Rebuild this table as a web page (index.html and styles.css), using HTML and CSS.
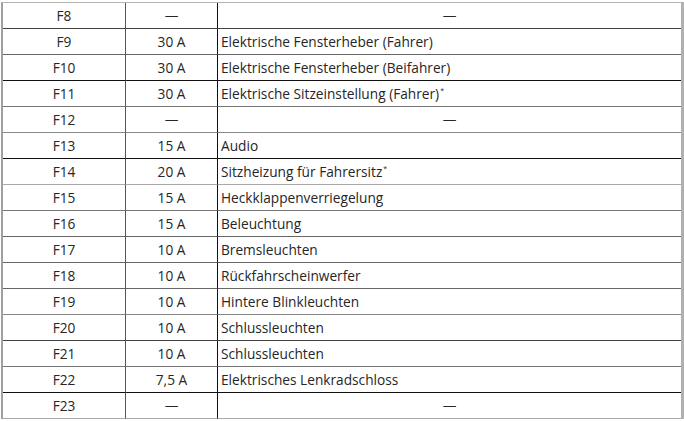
FILE: index.html
```html
<!DOCTYPE html>
<html lang="de">
<head>
<meta charset="utf-8">
<link rel="stylesheet" href="styles.css">
</head>
<body>
<table class="fuses">
<tbody>
<tr class="r-a"><td class="c-id">F8</td><td class="c-amp">—</td><td class="c-desc c-dash">—</td></tr>
<tr class="r-b"><td class="c-id">F9</td><td class="c-amp">30 A</td><td class="c-desc">Elektrische Fensterheber (Fahrer)</td></tr>
<tr class="r-k"><td class="c-id">F10</td><td class="c-amp">30 A</td><td class="c-desc">Elektrische Fensterheber (Beifahrer)</td></tr>
<tr class="r-c"><td class="c-id">F11</td><td class="c-amp">30 A</td><td class="c-desc">Elektrische Sitzeinstellung (Fahrer)<sup class="star">*</sup></td></tr>
<tr class="r-d"><td class="c-id">F12</td><td class="c-amp">—</td><td class="c-desc c-dash">—</td></tr>
<tr class="r-k"><td class="c-id">F13</td><td class="c-amp">15 A</td><td class="c-desc">Audio</td></tr>
<tr class="r-l"><td class="c-id">F14</td><td class="c-amp">20 A</td><td class="c-desc">Sitzheizung für Fahrersitz<sup class="star">*</sup></td></tr>
<tr class="r-c"><td class="c-id">F15</td><td class="c-amp">15 A</td><td class="c-desc">Heckklappenverriegelung</td></tr>
<tr class="r-b"><td class="c-id">F16</td><td class="c-amp">15 A</td><td class="c-desc">Beleuchtung</td></tr>
<tr class="r-b"><td class="c-id">F17</td><td class="c-amp">10 A</td><td class="c-desc">Bremsleuchten</td></tr>
<tr class="r-b"><td class="c-id">F18</td><td class="c-amp">10 A</td><td class="c-desc">Rückfahrscheinwerfer</td></tr>
<tr class="r-d"><td class="c-id">F19</td><td class="c-amp">10 A</td><td class="c-desc">Hintere Blinkleuchten</td></tr>
<tr class="r-a"><td class="c-id">F20</td><td class="c-amp">10 A</td><td class="c-desc">Schlussleuchten</td></tr>
<tr class="r-c"><td class="c-id">F21</td><td class="c-amp">10 A</td><td class="c-desc">Schlussleuchten</td></tr>
<tr class="r-k"><td class="c-id">F22</td><td class="c-amp">7,5 A</td><td class="c-desc">Elektrisches Lenkradschloss</td></tr>
<tr class="r-l"><td class="c-id">F23</td><td class="c-amp">—</td><td class="c-desc c-dash">—</td></tr>
</tbody>
</table>
</body>
</html>
```
FILE: styles.css
```css
html, body {
  margin: 0;
  padding: 0;
  background: #ffffff;
}

body {
  font-family: "Open Sans", "Liberation Sans", sans-serif;
  font-size: 13.7px;
  color: #262626;
}

.fuses {
  margin: 2px 0 0 1px;
  width: 683px;
  border-spacing: 0;
  border-collapse: separate;
  border-top: 1px solid #b4b4b4;
  border-left: 2px solid #a0a0a0;
  border-right: 3px solid #b0b0b0;
  table-layout: fixed;
}

.fuses td {
  height: 25px;
  padding: 0;
  line-height: 25px;
  white-space: nowrap;
  border-bottom: 1px solid #666;
}

.c-id {
  width: 122px;
  text-align: center;
  border-right: 1px solid #555;
}

.c-amp {
  width: 91px;
  text-align: center;
  border-right: 1px solid #111;
}

.c-desc {
  padding-left: 3px !important;
  text-align: left;
}

.c-dash {
  text-align: center;
  padding-left: 0 !important;
}

.star {
  font-size: 7px;
  line-height: 0;
  vertical-align: 6px;
  margin-left: 1px;
}

.r-a td { border-bottom-color: #444; }
.r-b td { border-bottom-color: #666; }
.r-c td { border-bottom-color: #777; }
.r-d td { border-bottom-color: #888; }
.r-k td { border-bottom-color: #111; }
.r-l td { border-bottom-color: #aaa; }
```
